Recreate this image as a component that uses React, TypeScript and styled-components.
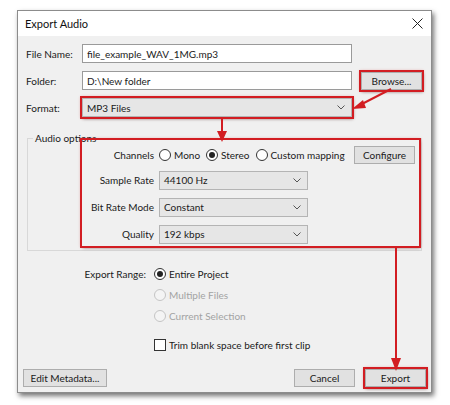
import styled, { createGlobalStyle, css } from "styled-components";

const GlobalStyle = createGlobalStyle`
  html, body {
    margin: 0;
    padding: 0;
    background: #ffffff;
  }
  body {
    font-family: Lato, "Noto Sans", Arial, sans-serif;
    font-size: 10px;
    color: #1a1a1a;
  }
`;

// red call-out frame drawn around the parts the guide points at
const marked = css`
  outline: 2px solid #d21d22;
  outline-offset: 0;
  box-shadow: 0 0 3px 1px rgba(200, 20, 20, 0.45), 1px 2px 3px rgba(0, 0, 0, 0.35);
`;

const Page = styled.div`
  position: relative;
  width: 450px;
  height: 405px;
  padding: 10px 0 0 17px;
  box-sizing: border-box;
`;

const Window = styled.div`
  width: 415px;
  height: 383px;
  background: #f0f0f0;
  border: 1px solid #8c8c8c;
  box-sizing: border-box;
  box-shadow: 2px 3px 5px rgba(0, 0, 0, 0.55);
  display: flex;
  flex-direction: column;
`;

const TitleBar = styled.div`
  height: 25px;
  background: #ffffff;
  display: flex;
  align-items: center;
  justify-content: space-between;
  padding: 0 8px 0 7px;
  font-size: 11px;
  color: #111;
`;

const Body = styled.div`
  flex: 1;
  display: flex;
  flex-direction: column;
  padding: 4px 5px 5px 8px;
`;

const Form = styled.div`
  display: grid;
  grid-template-columns: 56px 270px auto;
  grid-auto-rows: 27px;
  align-items: center;
`;

const Label = styled.div`
  white-space: nowrap;
`;

const TextField = styled.div`
  height: 19px;
  background: #fff;
  border: 1px solid #9a9a9a;
  box-sizing: border-box;
  display: flex;
  align-items: center;
  padding-left: 4px;
`;

const BrowseCell = styled.div`
  padding-left: 9px;
`;

const Button = styled.div<{ $marked?: boolean; $width: number }>`
  width: ${(p) => p.$width}px;
  height: 18px;
  box-sizing: border-box;
  background: #e1e1e1;
  border: 1px solid #adadad;
  display: flex;
  align-items: center;
  justify-content: center;
  white-space: nowrap;
  ${(p) => p.$marked && marked}
`;

const Combo = styled.div<{ $marked?: boolean; $width: number }>`
  width: ${(p) => p.$width}px;
  height: 19px;
  box-sizing: border-box;
  background: #e6e6e6;
  border: 1px solid #b4b4b4;
  display: flex;
  align-items: center;
  justify-content: space-between;
  padding: 0 6px 0 4px;
  ${(p) => p.$marked && marked}
`;

const GroupBox = styled.fieldset`
  margin: 12px 0 0 1px;
  width: 395px;
  height: 118px;
  box-sizing: border-box;
  border: 1px solid #d8d8d8;
  border-radius: 0;
  padding: 0;
  legend {
    padding: 0 2px;
    margin-left: 5px;
    line-height: 10px;
  }
`;

const OptionsPanel = styled.div`
  ${marked}
  margin: -3px 0 0 54px;
  width: 337px;
  height: 106px;
  box-sizing: border-box;
  display: grid;
  grid-template-columns: 70px auto;
  grid-template-rows: 25px 26px 28px 26px;
  column-gap: 5px;
  align-items: center;
  padding: 2px 0 0 2px;
`;

const RightLabel = styled.div`
  text-align: right;
  white-space: nowrap;
`;

const RadioRow = styled.div`
  display: flex;
  align-items: center;
  gap: 6px;
`;

const RadioItem = styled.label<{ $disabled?: boolean }>`
  display: flex;
  align-items: center;
  gap: 3px;
  white-space: nowrap;
  color: ${(p) => (p.$disabled ? "#a3a3a3" : "inherit")};
`;

const RadioCircle = styled.span<{ $checked?: boolean; $disabled?: boolean }>`
  width: 12px;
  height: 12px;
  box-sizing: border-box;
  border-radius: 50%;
  border: 1px solid ${(p) => (p.$disabled ? "#c4c4c4" : "#333")};
  background: ${(p) => (p.$disabled ? "#f4f4f4" : "#fff")};
  display: inline-flex;
  align-items: center;
  justify-content: center;
  &::after {
    content: "";
    width: 6px;
    height: 6px;
    border-radius: 50%;
    background: #222;
    display: ${(p) => (p.$checked ? "block" : "none")};
  }
`;

const ConfigureSlot = styled.div`
  margin-left: auto;
  padding-right: 4px;
`;

const RangeSection = styled.div`
  display: grid;
  grid-template-columns: 120px auto;
  grid-auto-rows: 21px;
  column-gap: 8px;
  align-items: center;
  margin-top: 12px;
`;

const CheckRow = styled.div`
  grid-column: 2;
  margin-top: 16px;
  display: flex;
  align-items: center;
  gap: 3px;
`;

const CheckBox = styled.span`
  width: 12px;
  height: 12px;
  box-sizing: border-box;
  border: 1px solid #333;
  background: #fff;
`;

const Footer = styled.div`
  margin-top: auto;
  display: flex;
  align-items: center;
  gap: 10px;
  margin-left: -3px;
  & > :first-child {
    margin-right: auto;
  }
`;

const Arrows = styled.svg`
  position: absolute;
  left: 0;
  top: 0;
  pointer-events: none;
`;

const Chevron = () => (
  <svg width="8" height="5" viewBox="0 0 8 5">
    <path d="M0.5 0.5 L4 4 L7.5 0.5" fill="none" stroke="#555" strokeWidth="1" />
  </svg>
);

const CloseIcon = () => (
  <svg width="11" height="11" viewBox="0 0 11 11">
    <path d="M0.5 0.5 L10.5 10.5 M10.5 0.5 L0.5 10.5" stroke="#222" strokeWidth="1" />
  </svg>
);

const Radio = ({ text, checked, disabled }: { text: string; checked?: boolean; disabled?: boolean }) => (
  <RadioItem $disabled={disabled}>
    <RadioCircle $checked={checked} $disabled={disabled} />
    {text}
  </RadioItem>
);

export default function App() {
  return (
    <Page>
      <GlobalStyle />
      <Window>
        <TitleBar>
          <span>Export Audio</span>
          <CloseIcon />
        </TitleBar>
        <Body>
          <Form>
            <Label>File Name:</Label>
            <TextField>file_example_WAV_1MG.mp3</TextField>
            <div />
            <Label>Folder:</Label>
            <TextField>D:\New folder</TextField>
            <BrowseCell>
              <Button $width={61} $marked>
                Browse...
              </Button>
            </BrowseCell>
            <Label>Format:</Label>
            <Combo $width={270} $marked>
              <span>MP3 Files</span>
              <Chevron />
            </Combo>
            <div />
          </Form>

          <GroupBox>
            <legend>Audio options</legend>
            <OptionsPanel>
              <RightLabel>Channels</RightLabel>
              <RadioRow>
                <Radio text="Mono" />
                <Radio text="Stereo" checked />
                <Radio text="Custom mapping" />
                <ConfigureSlot>
                  <Button $width={61}>Configure</Button>
                </ConfigureSlot>
              </RadioRow>
              <RightLabel>Sample Rate</RightLabel>
              <Combo $width={149}>
                <span>44100 Hz</span>
                <Chevron />
              </Combo>
              <RightLabel>Bit Rate Mode</RightLabel>
              <Combo $width={149}>
                <span>Constant</span>
                <Chevron />
              </Combo>
              <RightLabel>Quality</RightLabel>
              <Combo $width={149}>
                <span>192 kbps</span>
                <Chevron />
              </Combo>
            </OptionsPanel>
          </GroupBox>

          <RangeSection>
            <RightLabel>Export Range:</RightLabel>
            <Radio text="Entire Project" checked />
            <div />
            <Radio text="Multiple Files" disabled />
            <div />
            <Radio text="Current Selection" disabled />
            <CheckRow>
              <CheckBox />
              Trim blank space before first clip
            </CheckRow>
          </RangeSection>

          <Footer>
            <Button $width={84}>Edit Metadata...</Button>
            <Button $width={61}>Cancel</Button>
            <Button $width={61} $marked>
              Export
            </Button>
          </Footer>
        </Body>
      </Window>

      <Arrows width="450" height="405" viewBox="0 0 450 405">
        <g stroke="#d21d22" strokeWidth="2" fill="#d21d22">
          <line x1="391" y1="89" x2="360" y2="105" />
          <path d="M352 109 L363 100 L366 108 Z" stroke="none" />
          <line x1="222" y1="117" x2="222" y2="133" />
          <path d="M222 142 L217 131 L227 131 Z" stroke="none" />
          <line x1="396" y1="247" x2="396" y2="360" />
          <path d="M396 371 L391 358 L401 358 Z" stroke="none" />
        </g>
      </Arrows>
    </Page>
  );
}
